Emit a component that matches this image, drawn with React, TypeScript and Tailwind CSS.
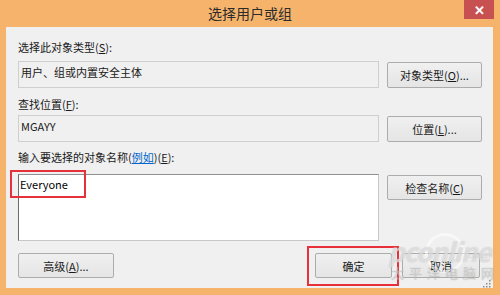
import type { ReactNode } from "react";

const font = { fontFamily: '"Noto Sans CJK SC", "Noto Sans", sans-serif' };

function Button({ children, className }: { children: ReactNode; className?: string }) {
  return (
    <button
      type="button"
      className={`flex items-center justify-center rounded-[2px] border border-[#acacac] bg-gradient-to-b from-[#f0f0f0] to-[#e5e5e5] text-[11px] leading-[14px] text-[#1a1a1a] ${className ?? ""}`}
    >
      {children}
    </button>
  );
}

function Label({ children, className }: { children: ReactNode; className?: string }) {
  return <div className={`h-[14px] text-[11px] leading-[14px] text-[#1a1a1a] ${className ?? ""}`}>{children}</div>;
}

function ReadField({ value }: { value: string }) {
  return (
    <div className="h-[27px] w-[361px] border border-[#cfcfcf] bg-[#f0f0f0] px-[2px] pt-[3px] text-[11px] leading-[14px] text-[#1a1a1a]">
      {value}
    </div>
  );
}

export default function App() {
  return (
    <div className="relative h-[295px] w-[500px] overflow-hidden bg-[#f6b36b] select-none" style={font}>
      {/* title bar */}
      <div className="flex h-[27px] items-center justify-center text-[14px] text-[#2b2b2b]">选择用户或组</div>
      <div className="absolute right-[6px] top-0 flex h-[19px] w-[30px] items-center justify-center bg-[#c75050] text-[13px] font-bold leading-none text-white">
        ✕
      </div>

      {/* client area */}
      <div className="mx-[6px] mr-[7px] h-[261px] bg-[#f0f0f0] pl-[12px] pr-[11px] pt-[13px]">
        <Label>
          选择此对象类型(<span className="underline">S</span>):
        </Label>
        <div className="mt-[7px] flex items-start gap-[8px]">
          <ReadField value="用户、组或内置安全主体" />
          <Button className="mt-[1px] h-[26px] w-[95px]">
            对象类型(<span className="underline">O</span>)...
          </Button>
        </div>

        <Label className="mt-[9px]">
          查找位置(<span className="underline">F</span>):
        </Label>
        <div className="mt-[4px] flex items-start gap-[8px]">
          <ReadField value="MGAYY" />
          <Button className="mt-[1px] h-[26px] w-[95px]">
            位置(<span className="underline">L</span>)...
          </Button>
        </div>

        <Label className="mt-[8px]">
          输入要选择的对象名称(<span className="text-[#0066cc] underline">例如</span>)(
          <span className="underline">E</span>):
        </Label>
        <div className="mt-[10px] flex items-start gap-[8px]">
          <div className="h-[67px] w-[361px] border border-[#c8c8c8] border-l-[#6b6b6b] border-t-[#8f8f8f] bg-white pl-[1px] pt-[2px] text-[11px] leading-[14px] text-black">
            Everyone
          </div>
          <Button className="mt-[1px] h-[25px] w-[95px]">
            检查名称(<span className="underline">C</span>)
          </Button>
        </div>

        <div className="mt-[12px] flex items-start">
          <Button className="h-[25px] w-[96px]">
            高级(<span className="underline">A</span>)...
          </Button>
          <Button className="ml-auto h-[25px] w-[77px]">确定</Button>
          <Button className="ml-[10px] mr-[2px] h-[25px] w-[78px]">取消</Button>
        </div>
      </div>

      {/* annotation boxes */}
      <div className="absolute left-[10px] top-[170px] h-[28px] w-[76px] border-2 border-[#e8303a]" />
      <div className="absolute left-[307px] top-[246px] h-[40px] w-[92px] border-2 border-[#e8303a]" />

      {/* watermark */}
      <div className="pointer-events-none absolute left-[425px] top-[233px] h-[40px] w-[40px] rounded-full border-[3px] border-white/50" />
      <div className="pointer-events-none absolute left-[388px] top-[238px] text-[26px] font-bold italic leading-none tracking-[-1px] text-white/50 [text-shadow:0_0_1px_rgba(150,150,150,0.6)]">
        pconline
      </div>
      <div className="pointer-events-none absolute left-[467px] top-[252px] text-[7px] leading-none text-[#cfcfcf]">.com.cn</div>
      <div className="pointer-events-none absolute left-[391px] top-[266px] text-[13px] leading-none tracking-[5px] text-white/40 [text-shadow:0_0_1px_rgba(130,130,130,0.7)]">
        太平洋电脑网
      </div>

      {/* resize grip */}
      <svg className="absolute left-[482px] top-[279px]" width="9" height="9" viewBox="0 0 9 9">
        {[
          [7, 1],
          [4, 4],
          [7, 4],
          [1, 7],
          [4, 7],
          [7, 7],
        ].map(([x, y]) => (
          <rect key={`${x}-${y}`} x={x} y={y} width="1.5" height="1.5" fill="#8a8a8a" />
        ))}
      </svg>
    </div>
  );
}
